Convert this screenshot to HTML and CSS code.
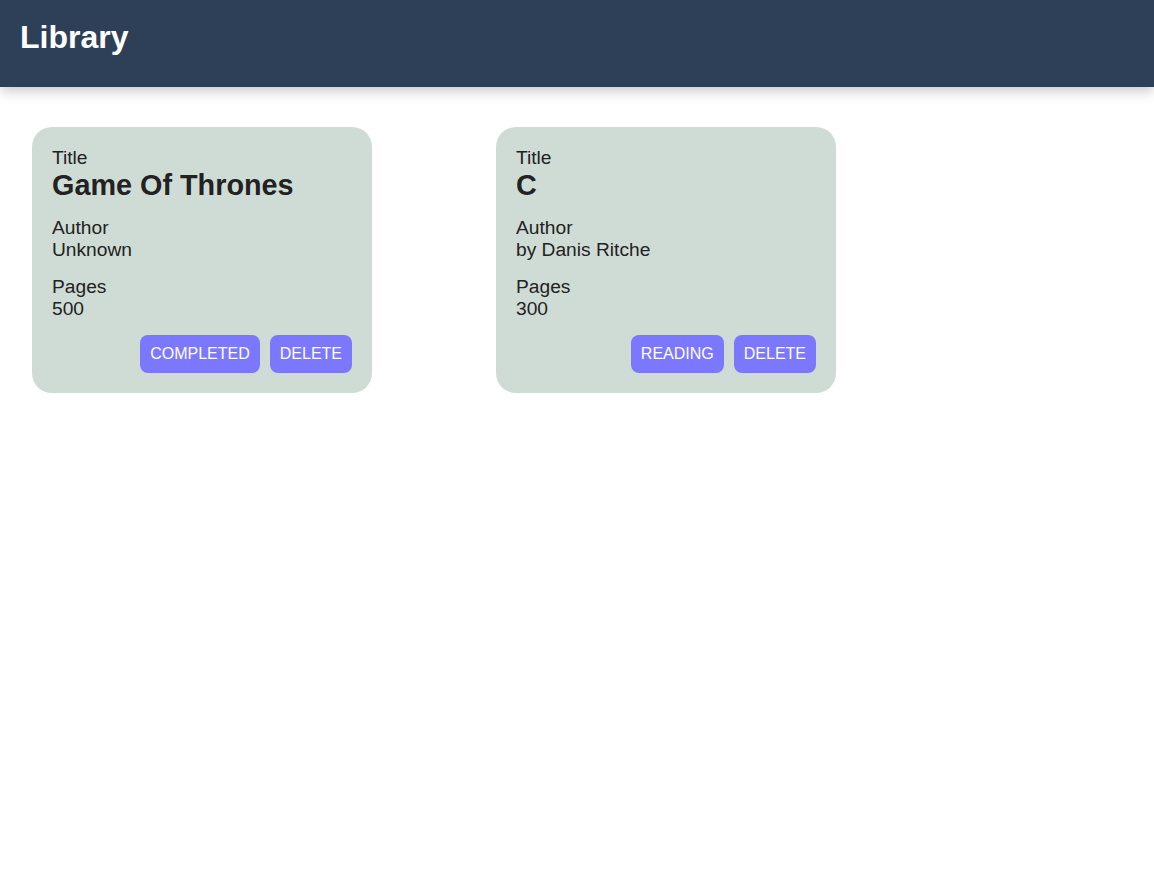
FILE: index.html
```html
<!DOCTYPE html>
<html>
<head>
<meta charset="utf-8">
<link rel="stylesheet" href="styles.css">
</head>
<body>
<header class="topbar"><h1 class="brand">Library</h1></header>
<main class="library">
  <div class="card">
    <div class="field">
      <div class="label">Title</div>
      <div class="book-title">Game Of Thrones</div>
    </div>
    <div class="field">
      <div class="label">Author</div>
      <div class="value">Unknown</div>
    </div>
    <div class="field">
      <div class="label">Pages</div>
      <div class="value">500</div>
    </div>
    <div class="actions">
      <button class="btn">COMPLETED</button>
      <button class="btn">DELETE</button>
    </div>
  </div>
  <div class="card">
    <div class="field">
      <div class="label">Title</div>
      <div class="book-title">C</div>
    </div>
    <div class="field">
      <div class="label">Author</div>
      <div class="value">by Danis Ritche</div>
    </div>
    <div class="field">
      <div class="label">Pages</div>
      <div class="value">300</div>
    </div>
    <div class="actions">
      <button class="btn">READING</button>
      <button class="btn">DELETE</button>
    </div>
  </div>
</main>
</body>
</html>
```
FILE: styles.css
```css
* { box-sizing: border-box; }
body {
  margin: 0;
  font-family: "Liberation Sans", Arial, sans-serif;
  color: #222;
  background: #fff;
}
.topbar {
  height: 87px;
  background: #2e3f58;
  padding: 0 20px;
  display: flex;
  align-items: flex-start;
  box-shadow: 0 4px 12px rgba(0,0,0,0.22);
}
.brand {
  margin: 19px 0 0;
  font-size: 32px;
  font-weight: bold;
  color: #fff;
}
.library {
  display: flex;
  gap: 124px;
  padding: 40px 32px;
  align-items: flex-start;
}
.card {
  width: 340px;
  background: #cfdcd5;
  border-radius: 20px;
  padding: 20px;
  display: flex;
  flex-direction: column;
  gap: 15px;
}
.label, .value {
  font-size: 19.2px;
  line-height: 22px;
}
.book-title {
  font-size: 28.8px;
  font-weight: bold;
  line-height: 33px;
}
.actions {
  display: flex;
  justify-content: flex-end;
  gap: 10px;
}
.btn {
  font-family: "Liberation Sans", Arial, sans-serif;
  font-size: 16px;
  color: #fff;
  background: #7b78ff;
  border: none;
  border-radius: 8px;
  height: 38px;
  padding: 0 10px;
}
```
